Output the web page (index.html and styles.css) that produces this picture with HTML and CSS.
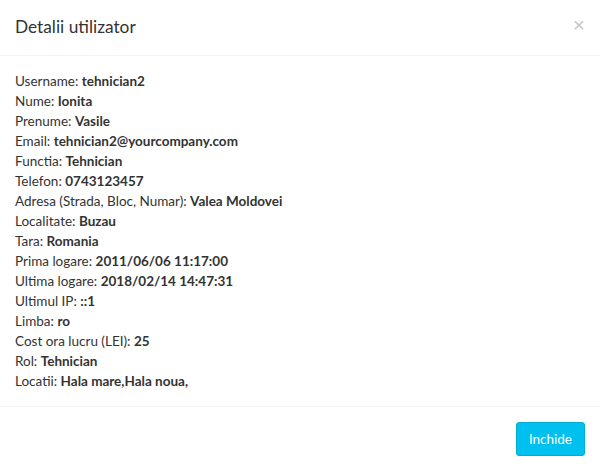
FILE: index.html
```html
<!DOCTYPE html>
<html lang="ro">
<head>
  <meta charset="UTF-8">
  <title>Detalii utilizator</title>
  <link rel="stylesheet" href="styles.css">
</head>
<body>
  <div class="modal">
    <div class="modal-header">
      <h4 class="modal-title">Detalii utilizator</h4>
      <button type="button" class="close">&times;</button>
    </div>
    <div class="modal-body">
      <div>Username: <b>tehnician2</b></div>
      <div>Nume: <b>Ionita</b></div>
      <div>Prenume: <b>Vasile</b></div>
      <div>Email: <b>tehnician2@yourcompany.com</b></div>
      <div>Functia: <b>Tehnician</b></div>
      <div>Telefon: <b>0743123457</b></div>
      <div>Adresa (Strada, Bloc, Numar): <b>Valea Moldovei</b></div>
      <div>Localitate: <b>Buzau</b></div>
      <div>Tara: <b>Romania</b></div>
      <div>Prima logare: <b>2011/06/06 11:17:00</b></div>
      <div>Ultima logare: <b>2018/02/14 14:47:31</b></div>
      <div>Ultimul IP: <b>::1</b></div>
      <div>Limba: <b>ro</b></div>
      <div>Cost ora lucru (LEI): <b>25</b></div>
      <div>Rol: <b>Tehnician</b></div>
      <div>Locatii: <b>Hala mare,Hala noua,</b></div>
    </div>
    <div class="modal-footer">
      <button type="button" class="btn-info">Inchide</button>
    </div>
  </div>
</body>
</html>
```
FILE: styles.css
```css
body {
  margin: 0;
  background: #fff;
  font-family: Lato, 'Open Sans', sans-serif;
  font-size: 13.5px;
  color: #333;
}

.modal {
  width: 600px;
}

.modal-header {
  display: flex;
  align-items: center;
  justify-content: space-between;
  height: 56px;
  padding: 0 15px;
  box-sizing: border-box;
  border-bottom: 1px solid #f4f4f4;
}

.modal-title {
  margin: 0;
  font-size: 17.3px;
  font-weight: normal;
  line-height: 1.4;
}

.close {
  border: none;
  background: none;
  padding: 0;
  font-size: 21px;
  font-family: 'Liberation Sans', sans-serif;
  color: #c8c8c8;
  margin-top: -6px;
  cursor: pointer;
}

.modal-body {
  padding: 15px 15px 15px;
  line-height: 20px;
}

.modal-body b {
  font-weight: bold;
}

.modal-footer {
  display: flex;
  justify-content: flex-end;
  padding: 15px;
  border-top: 1px solid #f4f4f4;
}

.btn-info {
  background: #00c0ef;
  border: 1px solid #00acd6;
  color: #fff;
  border-radius: 3px;
  font-family: inherit;
  font-size: 13.5px;
  line-height: 20px;
  padding: 6px 12px;
  cursor: pointer;
}
```
